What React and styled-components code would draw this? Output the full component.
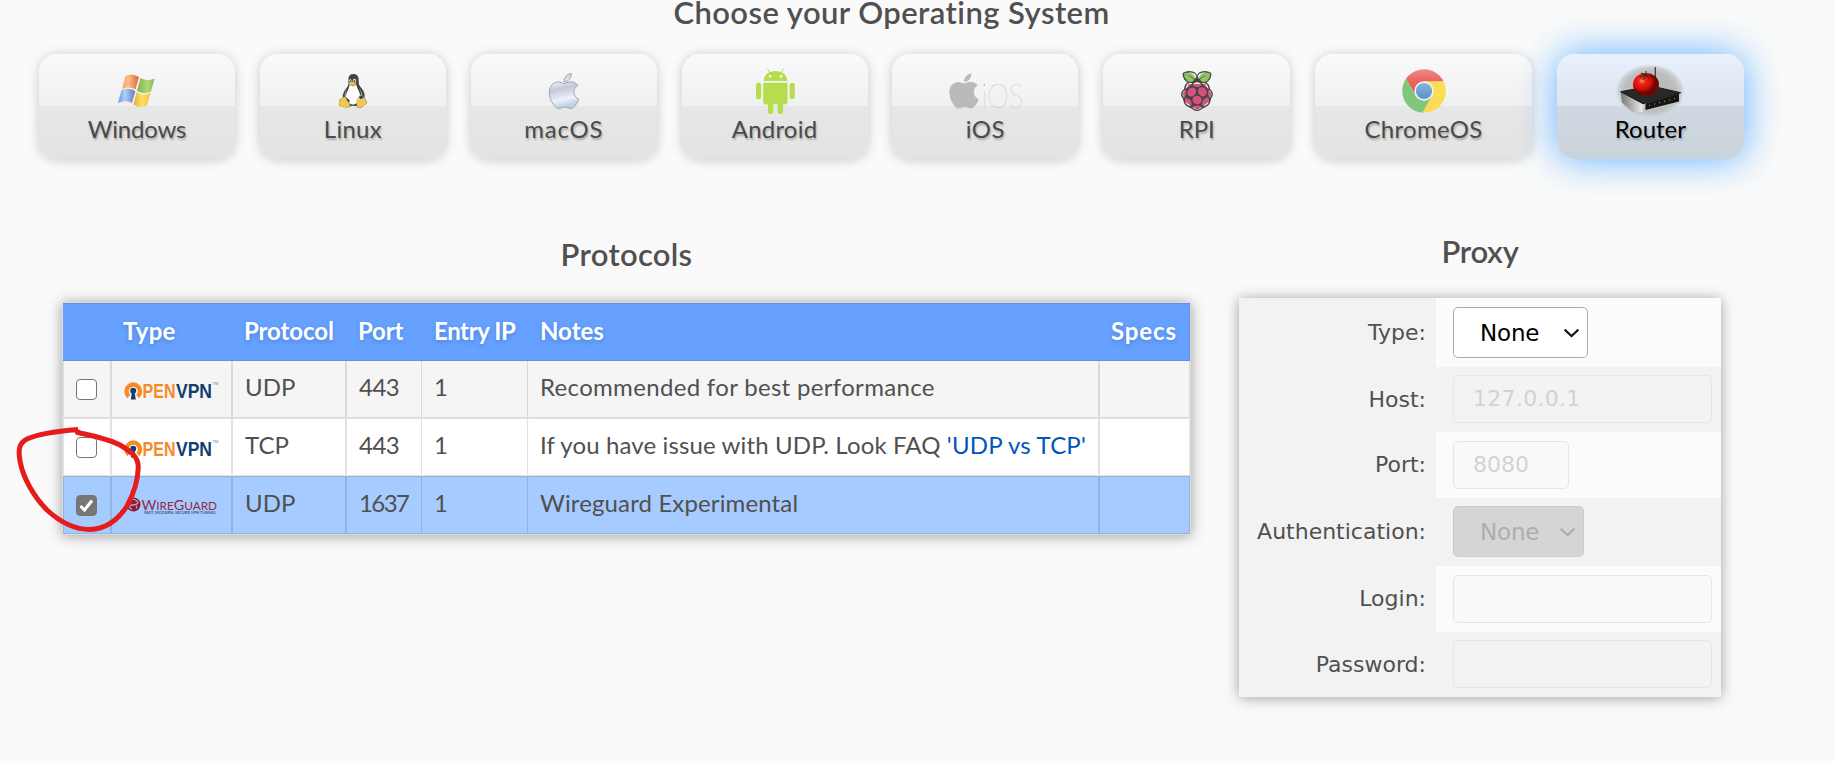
import React from 'react';
import styled, { createGlobalStyle, css } from 'styled-components';
import { FaApple, FaLinux, FaRaspberryPi } from 'react-icons/fa';

const GlobalStyle = createGlobalStyle`
  *, *::before, *::after { box-sizing: border-box; }
  body {
    margin: 0;
    background: #fafafa;
    color: #505050;
    font-family: Lato, "Liberation Sans", sans-serif;
    overflow: hidden;
  }
`;

const Page = styled.main`
  position: relative;
  width: 1835px;
  height: 761px;
  overflow: hidden;
  padding: 0 0 0 39px;
`;

const SystemSection = styled.section`
  width: 1705px;
`;

const Heading = styled.h2`
  margin: 0;
  font-size: 31px;
  font-weight: 600;
  line-height: ${(p) => p.$line || 37}px;
  letter-spacing: ${(p) => p.$spacing}px;
  text-align: center;
  color: #505050;
`;

const SystemBar = styled.div`
  display: flex;
  justify-content: space-between;
  margin-top: 29px;
`;

const SystemTile = styled.button`
  display: flex;
  flex-direction: column;
  align-items: center;
  flex: none;
  width: ${(p) => p.$width}px;
  height: 105px;
  padding: 0;
  border: 0;
  border-radius: 18px;
  font-family: inherit;
  font-size: 24px;
  line-height: 28.8px;
  color: #4a4a4a;
  text-shadow: 1px 2px 2px rgba(0, 0, 0, 0.25);
  background: linear-gradient(#fafafa, #f0f0f0 50%, #e7e7e7 50%, #e3e3e3);
  box-shadow: 0 1px 12px rgba(0, 0, 0, 0.2);
  ${(p) =>
    p.$active &&
    css`
      color: #000;
      background: linear-gradient(#e8f0fb, #dde5f0 50%, #d0d8e1 50%, #cad2da);
      box-shadow: 0 0 38px 1px #66b3ff;
    `}
`;

const TileIcon = styled.span`
  display: flex;
  align-items: center;
  justify-content: center;
  height: 61px;
  padding-top: 12px;
  margin-left: ${(p) => p.$shift || 0}px;
  text-shadow: none;
  svg { display: block; overflow: visible; }
`;

const TileLabel = styled.span`
  letter-spacing: ${(p) => p.$spacing}px;
`;

const Columns = styled.div`
  display: flex;
  align-items: flex-start;
  gap: 48px;
  margin-top: 74px;
  padding-left: 23px;
`;

const ProtocolSection = styled.section`
  width: 1129px;
  padding-top: 3px;
`;

const Table = styled.div`
  margin-top: 29px;
  border: 1px solid #dcdcdc;
  box-shadow: 0 1px 13px rgba(0, 0, 0, 0.38);
`;

const gridColumns = css`
  display: grid;
  grid-template-columns: 48px 121px 114px 76px 106px 571px 91px;
`;

const HeadRow = styled.div`
  ${gridColumns}
  height: 58px;
  background: #66a1ff;
  border: 1px solid #5c92e8;
  border-left: 0;
  color: #fff;
  font-weight: 700;
  text-shadow: 0 2px 4px rgba(30, 70, 150, 0.3);
`;

const Row = styled.div`
  ${gridColumns}
  height: ${(p) => p.$height || 58}px;
  background: ${(p) => p.$tone};
`;

const line = 'rgba(0, 0, 0, 0.11)';

const HeadCell = styled.div`
  display: flex;
  align-items: center;
  padding: 0 0 3px 12px;
  font-size: 24px;
  white-space: nowrap;
  letter-spacing: ${(p) => p.$spacing || 0}px;
`;

const Cell = styled.div`
  display: flex;
  align-items: center;
  justify-content: ${(p) => (p.$center ? 'center' : 'flex-start')};
  padding: ${(p) => (p.$center ? '0 1px 0 0' : '0 0 5px 11px')};
  font-size: 24px;
  white-space: pre;
  letter-spacing: ${(p) => p.$spacing || 0}px;
  border-left: 1px solid ${(p) => (p.$openLeft ? 'transparent' : line)};
  border-right: 1px solid ${line};
  border-bottom: 1px solid ${line};
  border-top: ${(p) => (p.$first ? 0 : 1)}px solid ${line};
`;

const TextCell = styled(Cell)`
  padding-left: 12px;
`;

const LogoCell = styled(Cell)`
  padding: 0 0 0 12px;
  svg { display: block; overflow: visible; }
`;

const FaqLink = styled.a`
  color: #0055bb;
  letter-spacing: 0.2px;
  text-decoration: none;
`;

const Checkbox = styled.span`
  display: flex;
  align-items: center;
  justify-content: center;
  width: 21px;
  height: 21px;
  margin-top: 1px;
  border: 1.5px solid #767676;
  border-radius: 4px;
  background: ${(p) => (p.$checked ? '#767676' : '#fff')};
`;

const ProxySection = styled.section`
  width: 482px;
`;

const ProxyPanel = styled.form`
  margin: 28px 0 0;
  background: #f2f2f2;
  box-shadow: 0 1px 13px rgba(0, 0, 0, 0.36);
  font-family: "DejaVu Sans", sans-serif;
`;

const Field = styled.div`
  display: grid;
  grid-template-columns: 197px 285px;
  height: ${(p) => p.$height}px;
`;

const FieldLabel = styled.label`
  display: flex;
  align-items: center;
  justify-content: flex-end;
  padding: 0 10px 1px 0;
  font-size: 22px;
`;

const FieldControl = styled.div`
  display: flex;
  align-items: flex-start;
  padding: ${(p) => (p.$light ? 9 : 8)}px 9px 0 17px;
  background: ${(p) => (p.$light ? '#fbfbfb' : '#f2f2f2')};
`;

const Input = styled.input`
  width: ${(p) => p.$width || 259}px;
  height: 48px;
  padding: 0 0 1px 19px;
  border: 1px solid #e6e6e6;
  border-radius: 5px;
  background: rgba(245, 245, 245, 0.3);
  font-family: inherit;
  font-size: 22px;
  letter-spacing: ${(p) => p.$spacing || 0}px;
  &::placeholder { color: #d2d2d2; opacity: 1; }
`;

const SelectBox = styled.div`
  display: flex;
  align-items: center;
  justify-content: space-between;
  width: ${(p) => p.$width}px;
  height: 51px;
  padding: 0 8px 0 26px;
  border: 1px solid ${(p) => (p.$disabled ? '#cbcbcb' : '#ababab')};
  border-radius: 5px;
  background: ${(p) => (p.$disabled ? '#d5d5d5' : '#fff')};
  color: ${(p) => (p.$disabled ? '#adadad' : '#000')};
  font-size: 23px;
  letter-spacing: -0.2px;
`;

const Scribble = styled.svg`
  position: absolute;
  left: 0;
  top: 410px;
  pointer-events: none;
`;

function WindowsIcon() {
  return (
    <svg width="37" height="34" viewBox="0 0 37 34" opacity="0.92">
      <defs>
        <linearGradient id="wr"><stop stopColor="#f7a35c" /><stop offset=".4" stopColor="#fbb878" /><stop offset="1" stopColor="#e2552b" /></linearGradient>
        <linearGradient id="wg"><stop stopColor="#76ad3e" /><stop offset=".6" stopColor="#a9d468" /><stop offset="1" stopColor="#7fb148" /></linearGradient>
        <linearGradient id="wb"><stop stopColor="#5c93dc" /><stop offset=".4" stopColor="#a9cdf4" /><stop offset="1" stopColor="#5a70b8" /></linearGradient>
        <linearGradient id="wy"><stop stopColor="#e6a92c" /><stop offset=".5" stopColor="#ffe05a" /><stop offset="1" stopColor="#f2bd2c" /></linearGradient>
      </defs>
      <path fill="url(#wr)" d="M7.500 2Q14-1.500 21 3L17.500 15.500Q11 12 4 15Z" />
      <path fill="url(#wg)" d="M22.500 4Q29 8 36.500 4.500L33 17.500Q26 21 19 17Z" />
      <path fill="url(#wb)" d="M3.400 16.300Q11 13 17.300 17.300L14 29Q8 25.500 0 29Z" />
      <path fill="url(#wy)" d="M18.500 18.300Q25 22.500 32.500 19L29 31.500Q22 35 15.500 30.500Z" />
    </svg>
  );
}

function LinuxIcon() {
  return (
    <svg width="34" height="34" viewBox="0 0 34 34">
      <ellipse cx="15.500" cy="21" rx="8" ry="10.500" fill="#fff" />
      <ellipse cx="16.500" cy="7" rx="3.600" ry="2.500" fill="#ddd" />
      <ellipse cx="16.700" cy="10" rx="3.400" ry="2" fill="#f2c33c" />
      <FaLinux size={34} color="#444" />
      <path fill="#f3c94c" stroke="#d5a73a" strokeWidth=".5" d="M3.300 29L4 25.500L7 24L8.500 22.800Q10 24 11 26.500L13.500 30.500Q13 33.800 10 33.700L3.300 31.500Z" />
      <path fill="#f3c94c" stroke="#d5a73a" strokeWidth=".5" d="M21 25.500Q24.500 27 27.500 24L31 29.300L24.500 33.500Q21 34 20.800 31Z" />
    </svg>
  );
}

function MacIcon() {
  return (
    <svg width="40" height="40" viewBox="0 0 40 40">
      <defs>
        <linearGradient id="mac" x2="0.200" y2="1">
          <stop stopColor="#b9bfcc" /><stop offset=".3" stopColor="#e6e8ed" /><stop offset=".5" stopColor="#c3c9d6" /><stop offset=".8" stopColor="#edf2fb" /><stop offset="1" stopColor="#c3cde0" />
        </linearGradient>
      </defs>
      <FaApple size={40} fill="url(#mac)" stroke="#969eaf" strokeWidth="12" />
    </svg>
  );
}

function AndroidIcon() {
  return (
    <svg width="39" height="46" viewBox="0 0 39 46" fill="#b7dc4e">
      <path d="M7.600 13Q8.500 3 19.500 3T31.300 13Z" />
      <path d="M11.500 .6L14 5M27.500 .6L25 5" stroke="#b7dc4e" />
      <circle cx="14" cy="8.300" r="1.200" fill="#fff" /><circle cx="25" cy="8.300" r="1.200" fill="#fff" />
      <path d="M7.200 14.700H31.500V33.500Q31.500 36.500 28.500 36.500H10Q7.200 36.500 7.200 33.500Z" />
      <rect y="14.700" width="5.200" height="16.500" rx="2.600" /><rect x="33.600" y="14.700" width="5.200" height="16.500" rx="2.600" />
      <rect x="12" y="30" width="5.300" height="16" rx="2.600" /><rect x="21.700" y="30" width="5.300" height="16" rx="2.600" />
    </svg>
  );
}

function IosIcon() {
  return (
    <svg width="74" height="34" viewBox="0 0 74 34">
      <FaApple size={40} x="-5" y="-3" color="#bababa" />
      <text
        x="32.500"
        y="33.500"
        fontFamily="Lato"
        fontSize="34"
        fontWeight="100"
        fill="#b4b4b4"
        textLength="42"
        lengthAdjust="spacingAndGlyphs"
      >
        iOS
      </text>
    </svg>
  );
}

function RaspberryIcon() {
  return (
    <svg width="40" height="40" viewBox="0 0 40 40">
      <ellipse cx="12.500" cy="6.500" rx="7.500" ry="4.500" transform="rotate(35 12.500 6.500)" fill="#92c663" />
      <ellipse cx="27.500" cy="6.500" rx="7.500" ry="4.500" transform="rotate(-35 27.500 6.500)" fill="#92c663" />
      <path fill="#d4527b" d="M12 13H28L34 22L33 30L20 39L7 30L6 22Z" />
      <FaRaspberryPi size={40} color="#454545" />
    </svg>
  );
}

function ChromeIcon() {
  return (
    <svg width="44" height="44" viewBox="0 0 44 44">
      <defs>
        <linearGradient id="cr" x2="0" y2="1"><stop stopColor="#ee8b84" /><stop offset=".5" stopColor="#e8625c" /></linearGradient>
        <linearGradient id="cb" x2="0" y2="1"><stop stopColor="#8ab4dc" /><stop offset="1" stopColor="#5592cb" /></linearGradient>
      </defs>
      <path fill="url(#cr)" d="M3.950 9.800A21.800 21.800 0 0 1 41.600 12.500H22V22L13.800 26.750Z" />
      <path fill="#fbdc54" d="M41.600 12.500A21.800 21.800 0 0 1 20.400 43.700L30.200 26.750L22 22V12.500Z" />
      <path fill="#80c77c" d="M20.400 43.700A21.800 21.800 0 0 1 3.950 9.800L13.800 26.750L22 22L30.200 26.750Z" />
      <circle cx="22" cy="22" r="9.700" fill="#f3f5f5" /><circle cx="22" cy="22" r="8.100" fill="url(#cb)" />
    </svg>
  );
}

function RouterIcon() {
  return (
    <svg width="70" height="50" viewBox="0 0 70 50">
      <defs>
        <radialGradient id="rh"><stop stopColor="#b5b5b5" /><stop offset=".75" stopColor="#bcbcbc" stopOpacity=".95" /><stop offset=".9" stopColor="#c4c8cc" stopOpacity=".7" /><stop offset="1" stopColor="#d5dce5" stopOpacity="0" /></radialGradient>
        <radialGradient id="rt" cx=".35" cy=".35"><stop stopColor="#ff9175" /><stop offset=".25" stopColor="#ee281a" /><stop offset=".7" stopColor="#d40d08" /><stop offset="1" stopColor="#6d0805" /></radialGradient>
        <linearGradient id="rs"><stop stopColor="#777" /><stop offset="1" stopColor="#eee" /></linearGradient>
      </defs>
      <ellipse cx="35" cy="25" rx="35" ry="27" fill="url(#rh)" />
      <path stroke="#333" strokeWidth="1.200" d="M40.300 1V20" />
      <path fill="#c6c6c6" d="M28 37.700L65.500 26.700V37L27 46Z" />
      <path fill="url(#rs)" d="M5.700 25.700L28 37.700L27.500 45.900L17.500 46L7 36.500Z" />
      <path fill="#151515" d="M30.500 37.500L64 27.500V35.500L30.500 44Z" />
      <path fill="#292929" stroke="#161616" d="M5.700 25.700L36 20L65.700 26.700L28 37.700Z" />
      <path stroke="#b5af39" strokeWidth="1" strokeDasharray="1.200 4" d="M34 39.500L60 32.500" />
      <ellipse cx="31" cy="18.500" rx="13" ry="11.500" fill="url(#rt)" />
      <path stroke="#39261b" strokeWidth="1" fill="none" d="M25 11L31 9L39 11M31 5V9L28 14M31 9L34 13M31 9L26 7" />
    </svg>
  );
}

function OpenVpnLogo() {
  return (
    <svg width="95" height="22" viewBox="0 -2 95 22" fontFamily="Liberation Sans" fontWeight="700">
      <path fill="none" stroke="#f58a26" strokeWidth="4.400" d="M4.800 16.500A6.800 6.800 0 1 1 13.700 16.500" />
      <circle cx="9.200" cy="10.800" r="3" fill="#123e6e" />
      <path fill="#123e6e" d="M8 12H10.500L11.800 19.500H6.800Z" />
      <text x="18.500" y="17.500" fontSize="21" fill="#f58a26" textLength="33" lengthAdjust="spacingAndGlyphs">PEN</text>
      <text x="52" y="17.500" fontSize="21" fill="#123e6e" textLength="36" lengthAdjust="spacingAndGlyphs">VPN</text>
      <text x="88.500" y="5" fontSize="4" fontWeight="400" fill="#777">TM</text>
    </svg>
  );
}

function WireGuardLogo() {
  return (
    <svg width="95" height="22" viewBox="0 0 95 22" fontFamily="Lato">
      <circle cx="9.500" cy="10.500" r="7" fill="#8a1d36" />
      <path fill="none" stroke="#c79bb5" strokeWidth="1.300" d="M6 6.500Q10 4 13 7T9 11T8 15.500M12.500 11.500V14.500" />
      <text x="17.500" y="15.800" fontSize="14" fill="#8f2a48" textLength="75.500" lengthAdjust="spacingAndGlyphs">W<tspan fontSize="11.500">IRE</tspan>G<tspan fontSize="11.500">UARD</tspan></text>
      <text x="20" y="19.800" fontSize="3" fontWeight="700" fill="#4b5875" textLength="72" lengthAdjust="spacingAndGlyphs">FAST, MODERN, SECURE VPN TUNNEL</text>
    </svg>
  );
}

const systems = [
  { name: 'Windows', width: 196, spacing: -0.2, Icon: WindowsIcon, shift: -1 },
  { name: 'Linux', width: 186, spacing: 0.25, Icon: LinuxIcon },
  { name: 'macOS', width: 186, spacing: 0.8, Icon: MacIcon },
  { name: 'Android', width: 186, spacing: 0.2, Icon: AndroidIcon, shift: 1 },
  { name: 'iOS', width: 186, spacing: 0.5, Icon: IosIcon, shift: 1 },
  { name: 'RPI', width: 187, spacing: 0, Icon: RaspberryIcon },
  { name: 'ChromeOS', width: 217, spacing: 0.3, Icon: ChromeIcon, shift: 1 },
  { name: 'Router', width: 187, spacing: 0, Icon: RouterIcon, active: true },
];

const protocols = [
  { Logo: OpenVpnLogo, protocol: 'UDP', port: '443', note: 'Recommended for best performance', spacing: 0.32, tone: '#f5f5f5', height: 57 },
  { Logo: OpenVpnLogo, protocol: 'TCP', port: '443', note: 'If you have issue with UDP. Look FAQ ', link: "'UDP vs TCP'", spacing: 0.13, tone: '#fff' },
  { Logo: WireGuardLogo, protocol: 'UDP', port: '1637', note: 'Wireguard Experimental', spacing: 0.13, tone: '#a6cbff', checked: true },
];

function Chevron({ color }) {
  return (
    <svg width="15" height="10" viewBox="0 0 15 10" fill="none">
      <path d="M.6 1.500L7.500 8L14.400 1.500" stroke={color} strokeWidth="2.100" />
    </svg>
  );
}

function Select({ width, disabled }) {
  return (
    <SelectBox $width={width} $disabled={disabled}>
      None
      <Chevron color={disabled ? '#adadad' : '#111'} />
    </SelectBox>
  );
}

const fields = [
  { label: 'Type:', height: 69, light: true, control: <Select width={135} /> },
  { label: 'Host:', height: 65, control: <Input disabled placeholder="127.0.0.1" $spacing={0.3} /> },
  { label: 'Port:', height: 66, light: true, control: <Input disabled placeholder="8080" $width={116} /> },
  { label: 'Authentication:', height: 68, control: <Select width={131} disabled /> },
  { label: 'Login:', height: 66, light: true, control: <Input disabled /> },
  { label: 'Password:', height: 65, control: <Input disabled /> },
];

export default function App() {
  return (
    <Page>
      <GlobalStyle />
      <SystemSection>
        <Heading $line={25} $spacing={0.43}>Choose your Operating System</Heading>
        <SystemBar>
          {systems.map(({ name, width, spacing, Icon, active, shift }) => (
            <SystemTile key={name} $width={width} $active={active}>
              <TileIcon $shift={shift}><Icon /></TileIcon>
              <TileLabel $spacing={spacing}>{name}</TileLabel>
            </SystemTile>
          ))}
        </SystemBar>
      </SystemSection>
      <Columns>
        <ProtocolSection>
          <Heading $spacing={0.3}>Protocols</Heading>
          <Table>
            <HeadRow>
              <HeadCell />
              <HeadCell $spacing={0.3}>Type</HeadCell>
              <HeadCell $spacing={-0.1}>Protocol</HeadCell>
              <HeadCell $spacing={-0.2}>Port</HeadCell>
              <HeadCell $spacing={-0.4}>Entry IP</HeadCell>
              <HeadCell $spacing={0}>Notes</HeadCell>
              <HeadCell $spacing={0.9}>Specs</HeadCell>
            </HeadRow>
            {protocols.map(({ Logo, protocol, port, note, link, spacing, tone, height, checked }, i) => (
              <Row key={note} $tone={tone} $height={height}>
                <Cell $center $first={i === 0}>
                  <Checkbox $checked={checked}>
                    {checked && (
                      <svg width="17" height="17" viewBox="0 0 17 17" fill="none">
                        <path d="M2.500 9L6.500 13L14 3.500" stroke="#fff" strokeWidth="3" />
                      </svg>
                    )}
                  </Checkbox>
                </Cell>
                <LogoCell $first={i === 0}><Logo /></LogoCell>
                <TextCell $first={i === 0} $spacing={0}>{protocol}</TextCell>
                <TextCell $first={i === 0} $spacing={port === '1637' ? -1.6 : -0.5}>{port}</TextCell>
                <Cell $first={i === 0} $openLeft>1</Cell>
                <Cell $first={i === 0} $openLeft $spacing={spacing}>{note}{link && <FaqLink>{link}</FaqLink>}</Cell>
                <Cell $first={i === 0} />
              </Row>
            ))}
          </Table>
        </ProtocolSection>
        <ProxySection>
          <Heading $spacing={-0.3}>Proxy</Heading>
          <ProxyPanel>
            {fields.map(({ label, height, light, control }) => (
              <Field key={label} $height={height}>
                <FieldLabel>{label}</FieldLabel>
                <FieldControl $light={light}>{control}</FieldControl>
              </Field>
            ))}
          </ProxyPanel>
        </ProxySection>
      </Columns>
      <Scribble width="160" height="140" viewBox="0 410 160 140" fill="none">
        <path
          d="M78 429.500C60 431 40 433 27 439C19 443 18 450 20 461C23 478 34 497 47 510C60 522 73 529.500 90 529.500C106 529 118 520 127 506C134 493 138 482 138.300 467C138 457 132 452 120 445C108 439 95 436 77.500 432.500L78 429.500"
          stroke="#e61c1c"
          strokeWidth="5"
          strokeLinejoin="round"
        />
      </Scribble>
    </Page>
  );
}
